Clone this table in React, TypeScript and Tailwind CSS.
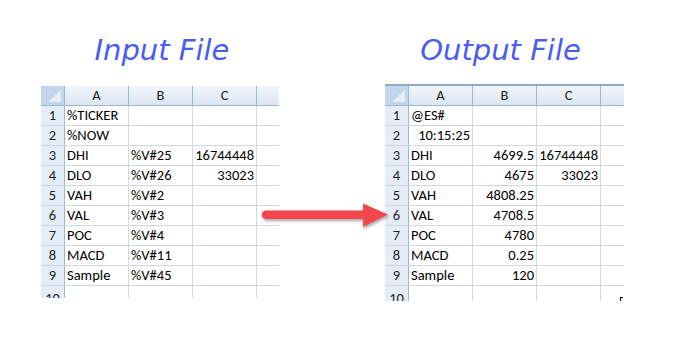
import React from "react";

type Cell = { text?: string; right?: boolean };

const inputRows: Cell[][] = [
  [{ text: "%TICKER" }, {}, {}],
  [{ text: "%NOW" }, {}, {}],
  [{ text: "DHI" }, { text: "%V#25" }, { text: "16744448", right: true }],
  [{ text: "DLO" }, { text: "%V#26" }, { text: "33023", right: true }],
  [{ text: "VAH" }, { text: "%V#2" }, {}],
  [{ text: "VAL" }, { text: "%V#3" }, {}],
  [{ text: "POC" }, { text: "%V#4" }, {}],
  [{ text: "MACD" }, { text: "%V#11" }, {}],
  [{ text: "Sample" }, { text: "%V#45" }, {}],
];

const outputRows: Cell[][] = [
  [{ text: "@ES#" }, {}, {}],
  [{ text: "10:15:25", right: true }, {}, {}],
  [{ text: "DHI" }, { text: "4699.5", right: true }, { text: "16744448", right: true }],
  [{ text: "DLO" }, { text: "4675", right: true }, { text: "33023", right: true }],
  [{ text: "VAH" }, { text: "4808.25", right: true }, {}],
  [{ text: "VAL" }, { text: "4708.5", right: true }, {}],
  [{ text: "POC" }, { text: "4780", right: true }, {}],
  [{ text: "MACD" }, { text: "0.25", right: true }, {}],
  [{ text: "Sample" }, { text: "120", right: true }, {}],
];

function Sheet({ rows, extra, height, doubleTop }: { rows: Cell[][]; extra: string; height: string; doubleTop?: boolean }) {
  return (
    <div className={`flex flex-col overflow-hidden font-['Carlito','Lato',sans-serif] text-[14.5px] text-black ${height}`}>
      {doubleTop ? (
        <div className="h-[3px] border-t border-b border-[#8fa9c8] bg-white" />
      ) : (
        <div className="h-px bg-[#9fb3ca]" />
      )}
      {/* column headers */}
      <div className="flex h-[20px] shrink-0 border-b border-[#9eb6ce] bg-gradient-to-b from-[#f1f5fb] to-[#dbe5f2]">
        <div className="w-[24px] shrink-0 border-r border-[#9eb6ce] bg-[#c3d5ed] p-[3px]">
          <svg width="17" height="13" viewBox="0 0 17 13" className="block">
            <path d="M17 1 L17 13 L4 13 Z" fill="#e6eef8" />
          </svg>
        </div>
        {["A", "B", "C"].map((c) => (
          <div key={c} className="flex w-[64px] shrink-0 items-center justify-center border-r border-[#9eb6ce] text-[#222]">
            {c}
          </div>
        ))}
        <div className={`${extra} shrink-0`} />
      </div>
      {rows.map((r, i) => (
        <div key={i} className="flex h-[20px] shrink-0 border-b border-[#d0d7e5]">
          <div className="flex w-[24px] shrink-0 items-center justify-center border-r border-[#9eb6ce] bg-[#e4ecf7] text-[#222]">
            {i + 1}
          </div>
          {r.map((c, j) => (
            <div
              key={j}
              className={`flex w-[64px] shrink-0 items-center whitespace-nowrap border-r border-[#d0d7e5] px-[2px] ${c.right ? "justify-end" : "justify-start"}`}
            >
              {c.text}
            </div>
          ))}
          <div className={`${extra} shrink-0`} />
        </div>
      ))}
      <div className="flex h-[20px] shrink-0">
        <div className="flex w-[24px] shrink-0 items-start justify-center border-r border-[#9eb6ce] bg-[#e4ecf7] pt-[2px] text-[#222]">
          10
        </div>
        {[0, 1, 2].map((j) => (
          <div key={j} className="w-[64px] shrink-0 border-r border-[#d0d7e5]" />
        ))}
      </div>
    </div>
  );
}

export default function App() {
  return (
    <div className="relative h-[338px] w-[698px] overflow-hidden bg-white">
      <div className="flex pt-[32px] pl-[41px]">
        <div className="flex w-[238px] flex-col">
          <div className="h-[36px] pl-[4px] text-center font-['DejaVu_Sans',sans-serif] text-[29px] italic leading-[36px] text-[#4a5cf2]">
            Input File
          </div>
          <div className="mt-[18px]">
            <Sheet rows={inputRows} extra="w-[21px]" height="h-[212px]" />
          </div>
        </div>
        <div className="ml-[106px] flex w-[239px] flex-col">
          <div className="h-[36px] pr-[8px] text-center font-['DejaVu_Sans',sans-serif] text-[29px] italic leading-[36px] text-[#4a5cf2]">
            Output File
          </div>
          <div className="mt-[16px]">
            <Sheet rows={outputRows} extra="w-[25px]" height="h-[217px]" doubleTop />
          </div>
        </div>
      </div>

      {/* small corner mark */}
      <div className="absolute left-[620px] top-[297px] h-[4px] w-[3px] border-l border-t border-black" />

      {/* red arrow */}
      <svg className="absolute left-[255px] top-[198px]" width="140" height="36" viewBox="255 198 140 36">
        <defs>
          <filter id="sh" x="-10%" y="-40%" width="120%" height="180%">
            <feDropShadow dx="1" dy="2" stdDeviation="1.5" floodColor="#000" floodOpacity="0.35" />
          </filter>
        </defs>
        <g filter="url(#sh)">
          <path d="M266 210.5 L366 210.5 L366 219 L266 219 A4.25 4.25 0 0 1 266 210.5 Z" fill="#f2474e" />
          <path d="M363 203.5 L388 214.5 L363 227 Z" fill="#f2474e" />
        </g>
      </svg>
    </div>
  );
}
